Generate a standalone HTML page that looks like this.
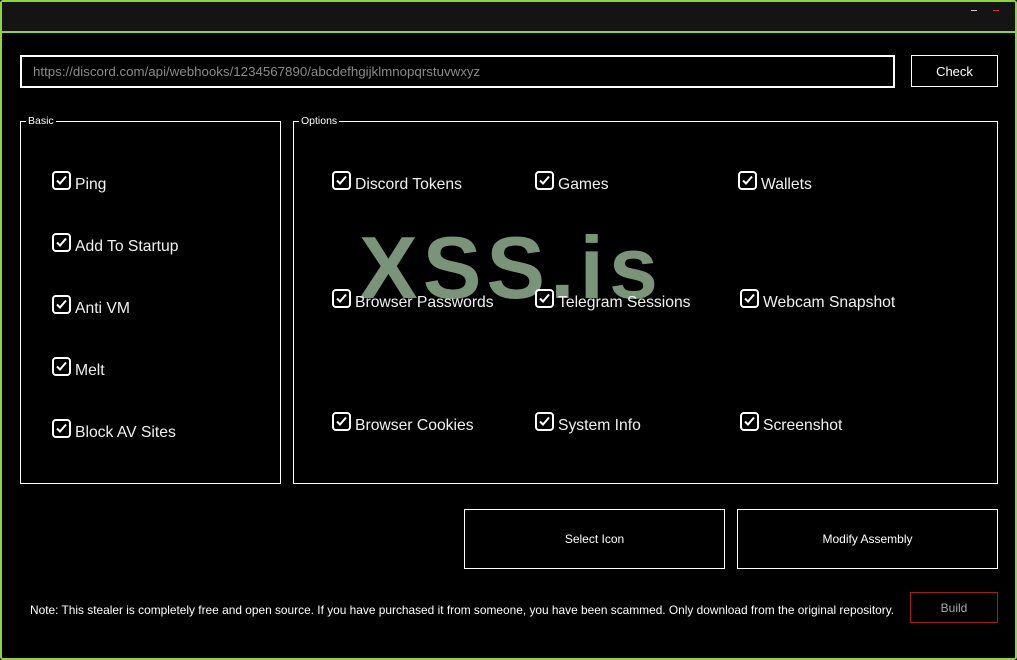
<!DOCTYPE html>
<html><head><style>
*{margin:0;padding:0;box-sizing:border-box}
body{width:1017px;height:660px;background:#000;position:relative;overflow:hidden;font-family:"Liberation Sans",sans-serif;color:#fff}
.frame{position:absolute;left:0;top:0;width:1017px;height:660px;border:2px solid #8fd43a;border-radius:3px}
.title{position:absolute;left:2px;top:2px;right:2px;height:31px;background:#141414;border-bottom:2px solid #8fd43a}
.abs{position:absolute}
.box{position:absolute;border:2px solid #fff}
.lbl{position:absolute;font-size:10.5px;background:#000;padding:0 2px;top:-7px;color:#fff}
.cb{position:absolute;font-size:15.7px;color:#f0f0f0;white-space:nowrap;line-height:18px}
.cb svg{position:absolute;left:0;top:0}
.cb span{position:absolute;left:23px;top:5px}
.btn{position:absolute;border:1px solid #fff;font-size:12px;display:flex;align-items:center;justify-content:center}
</style></head><body>
<div class="frame"></div>
<div class="title"></div>
<div class="abs" style="left:971px;top:10px;width:6px;height:1px;background:#ccc"></div>
<div class="abs" style="left:993px;top:10px;width:6px;height:1px;background:#c33"></div>
<div class="box" style="left:20px;top:55px;width:875px;height:33px;"></div>
<div class="abs" style="left:33px;top:64px;font-size:13.3px;color:#8a8a8a">https://discord.com/api/webhooks/1234567890/abcdefhgijklmnopqrstuvwxyz</div>
<div class="btn" style="left:911px;top:55px;width:87px;height:32px;font-size:13px">Check</div>
<div class="box" style="left:20px;top:121px;width:261px;height:363px;border-width:1px"><div class="lbl" style="left:5px">Basic</div></div>
<div class="box" style="left:293px;top:121px;width:705px;height:363px;border-width:1px"><div class="lbl" style="left:5px">Options</div></div>
<div class="abs" style="left:359px;top:218px;font-size:88px;font-weight:bold;color:#7a947a;letter-spacing:5px;line-height:100px">XSS.is</div>
<div id="cbs"></div>
<div class="btn" style="left:464px;top:509px;width:261px;height:60px">Select Icon</div>
<div class="btn" style="left:737px;top:509px;width:261px;height:60px">Modify Assembly</div>
<div class="abs" style="left:30px;top:603px;font-size:11.9px;white-space:nowrap">Note: This stealer is completely free and open source. If you have purchased it from someone, you have been scammed. Only download from the original repository.</div>
<div class="btn" style="left:910px;top:592px;width:88px;height:31px;border-color:#a02020;color:#aaa">Build</div>
<script>
var items=[[52,171,"Ping"],[52,233,"Add To Startup"],[52,295,"Anti VM"],[52,357,"Melt"],[52,419,"Block AV Sites"],
[332,171,"Discord Tokens"],[535,171,"Games"],[738,171,"Wallets"],
[332,289,"Browser Passwords"],[535,289,"Telegram Sessions"],[740,289,"Webcam Snapshot"],
[332,412,"Browser Cookies"],[535,412,"System Info"],[740,412,"Screenshot"]];
var h="";items.forEach(function(i){h+='<div class="cb" style="left:'+i[0]+'px;top:'+i[1]+'px"><svg width="19" height="19" viewBox="0 0 19 19"><rect x="1" y="1" width="17" height="17" rx="3" fill="none" stroke="#fff" stroke-width="2"/><path d="M5 9.5l3 3 6-7" fill="none" stroke="#fff" stroke-width="2"/></svg><span>'+i[2]+'</span></div>'});
document.getElementById("cbs").innerHTML=h;
</script>
</body></html>
